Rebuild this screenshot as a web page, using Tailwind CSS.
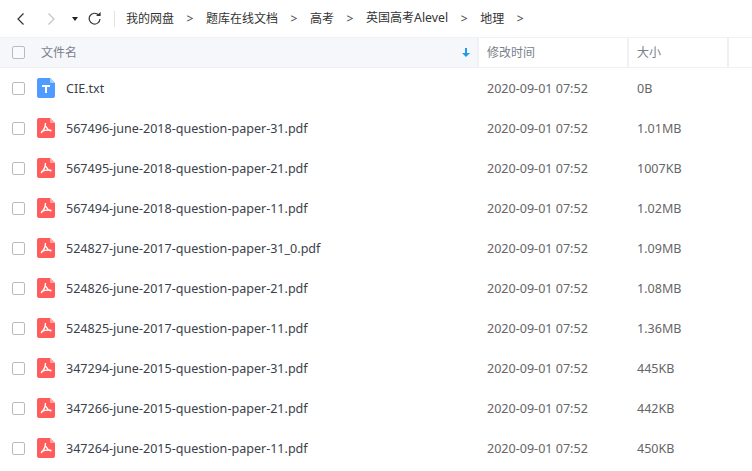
<!DOCTYPE html>
<html lang="en">

<head>
  <meta charset="UTF-8" />
  <title>文件列表</title>
  <script src="https://cdn.jsdelivr.net/npm/@tailwindcss/browser@4"></script>
</head>

<body class="bg-white w-[752px] h-[471px] overflow-hidden font-['Noto_Sans','Noto_Sans_CJK_SC',sans-serif] text-[12px] text-[#3a3f4a]">

  <!-- toolbar -->
  <div class="flex items-center h-[37px] pl-[17px] text-[#333]">
    <svg class="w-[7px] h-[12px]" viewBox="0 0 7 12" fill="none" stroke="#333" stroke-width="1.2"><path d="M6.5 0.5 L1 6 L6.5 11.5" /></svg>
    <svg class="w-[7px] h-[12px] ml-[24px]" viewBox="0 0 7 12" fill="none" stroke="#c4c4c4" stroke-width="1.2"><path d="M0.5 0.5 L6 6 L0.5 11.5" /></svg>
    <svg class="w-[6px] h-[4px] ml-[17px]" viewBox="0 0 6 4" fill="#222"><path d="M0 0 H6 L3 4 Z" /></svg>
    <svg class="w-[13px] h-[13px] ml-[10px]" viewBox="0 0 13 13" fill="none" stroke="#333" stroke-width="1.2"><path d="M10.6 3 A5.4 5.4 0 1 0 12 7" /><path d="M8 4 L12.6 4 L12.6 0 Z" fill="#333" stroke="none" /></svg>
    <div class="w-px h-[16px] bg-[#e2e2e2] ml-[13px]"></div>
    <div class="flex items-center ml-[11px]">
      <span>我的网盘</span><span class="w-[32px] text-center text-[#444]">&gt;</span>
      <span>题库在线文档</span><span class="w-[32px] text-center text-[#444]">&gt;</span>
      <span>高考</span><span class="w-[32px] text-center text-[#444]">&gt;</span>
      <span>英国高考<span class="text-[12.3px]">Alevel</span></span><span class="w-[32px] text-center text-[#444]">&gt;</span>
      <span>地理</span><span class="w-[32px] text-center text-[#444]">&gt;</span>
    </div>
  </div>

  <!-- table header -->
  <div class="flex h-[31px] bg-[#f6f7fb] border-y border-[#f0f1f4] text-[#7a7f8c]">
    <div class="w-[479px] flex items-center pl-[12px] pr-[7px] border-r-2 border-[#f0f1f4]">
      <span class="w-[13px] h-[13px] border border-[#bbb] rounded-[2px] bg-white/40"></span>
      <span class="ml-[16px] flex-1">文件名</span>
      <svg class="w-[8px] h-[9px]" viewBox="0 0 8 9" fill="#1e9bf0"><path d="M3 0 H5 V5 H8 L4 9 L0 5 H3 Z" /></svg>
    </div>
    <div class="w-[150px] flex items-center pl-[8px] bg-white border-r-2 border-[#f0f1f4]">修改时间</div>
    <div class="w-[100px] flex items-center pl-[8px] bg-white border-r-2 border-[#f0f1f4]">大小</div>
    <div class="flex-1 bg-white"></div>
  </div>

  <!-- rows -->
  <div class="text-[12.55px]">
    <div class="flex items-center h-[40px]">
      <span class="w-[13px] h-[13px] ml-[12px] border border-[#bbb] rounded-[2px]"></span>
      <svg class="w-[18px] h-[20px] ml-[12px]" viewBox="0 0 18 20"><path d="M2 0 H13 L18 5 V18 A2 2 0 0 1 16 20 H2 A2 2 0 0 1 0 18 V2 A2 2 0 0 1 2 0 Z" fill="#4f9bff" /><path d="M13 0 L18 5 H14 A1 1 0 0 1 13 4 Z" fill="#a9cdff" /><path d="M5 7 H13 V9 H10 V15 H8 V9 H5 Z" fill="#fff" /></svg>
      <div class="flex pt-[2px] ml-[11px]">
        <span class="w-[421px]">CIE.txt</span>
        <span class="w-[150px] text-[#666]">2020-09-01 07:52</span>
        <span class="text-[#666]">0B</span>
      </div>
    </div>
    <div class="flex items-center h-[40px]">
      <span class="w-[13px] h-[13px] ml-[12px] border border-[#bbb] rounded-[2px]"></span>
      <svg class="w-[18px] h-[20px] ml-[12px]" viewBox="0 0 18 20"><path d="M2 0 H13 L18 5 V18 A2 2 0 0 1 16 20 H2 A2 2 0 0 1 0 18 V2 A2 2 0 0 1 2 0 Z" fill="#ff5c5c" /><path d="M13 0 L18 5 H14 A1 1 0 0 1 13 4 Z" fill="#ffa9a9" /><path d="M8.5 5 C8.5 9 7 12 4 15 M4.5 13.5 C8 12 11 11.5 14.5 12.5 M8.5 8 C9.5 10 11 12 14 13" fill="none" stroke="#fff" stroke-width="1.4" /></svg>
      <div class="flex pt-[2px] ml-[11px]">
        <span class="w-[421px]">567496-june-2018-question-paper-31.pdf</span>
        <span class="w-[150px] text-[#666]">2020-09-01 07:52</span>
        <span class="text-[#666]">1.01MB</span>
      </div>
    </div>
    <div class="flex items-center h-[40px]">
      <span class="w-[13px] h-[13px] ml-[12px] border border-[#bbb] rounded-[2px]"></span>
      <svg class="w-[18px] h-[20px] ml-[12px]" viewBox="0 0 18 20"><path d="M2 0 H13 L18 5 V18 A2 2 0 0 1 16 20 H2 A2 2 0 0 1 0 18 V2 A2 2 0 0 1 2 0 Z" fill="#ff5c5c" /><path d="M13 0 L18 5 H14 A1 1 0 0 1 13 4 Z" fill="#ffa9a9" /><path d="M8.5 5 C8.5 9 7 12 4 15 M4.5 13.5 C8 12 11 11.5 14.5 12.5 M8.5 8 C9.5 10 11 12 14 13" fill="none" stroke="#fff" stroke-width="1.4" /></svg>
      <div class="flex pt-[2px] ml-[11px]">
        <span class="w-[421px]">567495-june-2018-question-paper-21.pdf</span>
        <span class="w-[150px] text-[#666]">2020-09-01 07:52</span>
        <span class="text-[#666]">1007KB</span>
      </div>
    </div>
    <div class="flex items-center h-[40px]">
      <span class="w-[13px] h-[13px] ml-[12px] border border-[#bbb] rounded-[2px]"></span>
      <svg class="w-[18px] h-[20px] ml-[12px]" viewBox="0 0 18 20"><path d="M2 0 H13 L18 5 V18 A2 2 0 0 1 16 20 H2 A2 2 0 0 1 0 18 V2 A2 2 0 0 1 2 0 Z" fill="#ff5c5c" /><path d="M13 0 L18 5 H14 A1 1 0 0 1 13 4 Z" fill="#ffa9a9" /><path d="M8.5 5 C8.5 9 7 12 4 15 M4.5 13.5 C8 12 11 11.5 14.5 12.5 M8.5 8 C9.5 10 11 12 14 13" fill="none" stroke="#fff" stroke-width="1.4" /></svg>
      <div class="flex pt-[2px] ml-[11px]">
        <span class="w-[421px]">567494-june-2018-question-paper-11.pdf</span>
        <span class="w-[150px] text-[#666]">2020-09-01 07:52</span>
        <span class="text-[#666]">1.02MB</span>
      </div>
    </div>
    <div class="flex items-center h-[40px]">
      <span class="w-[13px] h-[13px] ml-[12px] border border-[#bbb] rounded-[2px]"></span>
      <svg class="w-[18px] h-[20px] ml-[12px]" viewBox="0 0 18 20"><path d="M2 0 H13 L18 5 V18 A2 2 0 0 1 16 20 H2 A2 2 0 0 1 0 18 V2 A2 2 0 0 1 2 0 Z" fill="#ff5c5c" /><path d="M13 0 L18 5 H14 A1 1 0 0 1 13 4 Z" fill="#ffa9a9" /><path d="M8.5 5 C8.5 9 7 12 4 15 M4.5 13.5 C8 12 11 11.5 14.5 12.5 M8.5 8 C9.5 10 11 12 14 13" fill="none" stroke="#fff" stroke-width="1.4" /></svg>
      <div class="flex pt-[2px] ml-[11px]">
        <span class="w-[421px]">524827-june-2017-question-paper-31_0.pdf</span>
        <span class="w-[150px] text-[#666]">2020-09-01 07:52</span>
        <span class="text-[#666]">1.09MB</span>
      </div>
    </div>
    <div class="flex items-center h-[40px]">
      <span class="w-[13px] h-[13px] ml-[12px] border border-[#bbb] rounded-[2px]"></span>
      <svg class="w-[18px] h-[20px] ml-[12px]" viewBox="0 0 18 20"><path d="M2 0 H13 L18 5 V18 A2 2 0 0 1 16 20 H2 A2 2 0 0 1 0 18 V2 A2 2 0 0 1 2 0 Z" fill="#ff5c5c" /><path d="M13 0 L18 5 H14 A1 1 0 0 1 13 4 Z" fill="#ffa9a9" /><path d="M8.5 5 C8.5 9 7 12 4 15 M4.5 13.5 C8 12 11 11.5 14.5 12.5 M8.5 8 C9.5 10 11 12 14 13" fill="none" stroke="#fff" stroke-width="1.4" /></svg>
      <div class="flex pt-[2px] ml-[11px]">
        <span class="w-[421px]">524826-june-2017-question-paper-21.pdf</span>
        <span class="w-[150px] text-[#666]">2020-09-01 07:52</span>
        <span class="text-[#666]">1.08MB</span>
      </div>
    </div>
    <div class="flex items-center h-[40px]">
      <span class="w-[13px] h-[13px] ml-[12px] border border-[#bbb] rounded-[2px]"></span>
      <svg class="w-[18px] h-[20px] ml-[12px]" viewBox="0 0 18 20"><path d="M2 0 H13 L18 5 V18 A2 2 0 0 1 16 20 H2 A2 2 0 0 1 0 18 V2 A2 2 0 0 1 2 0 Z" fill="#ff5c5c" /><path d="M13 0 L18 5 H14 A1 1 0 0 1 13 4 Z" fill="#ffa9a9" /><path d="M8.5 5 C8.5 9 7 12 4 15 M4.5 13.5 C8 12 11 11.5 14.5 12.5 M8.5 8 C9.5 10 11 12 14 13" fill="none" stroke="#fff" stroke-width="1.4" /></svg>
      <div class="flex pt-[2px] ml-[11px]">
        <span class="w-[421px]">524825-june-2017-question-paper-11.pdf</span>
        <span class="w-[150px] text-[#666]">2020-09-01 07:52</span>
        <span class="text-[#666]">1.36MB</span>
      </div>
    </div>
    <div class="flex items-center h-[40px]">
      <span class="w-[13px] h-[13px] ml-[12px] border border-[#bbb] rounded-[2px]"></span>
      <svg class="w-[18px] h-[20px] ml-[12px]" viewBox="0 0 18 20"><path d="M2 0 H13 L18 5 V18 A2 2 0 0 1 16 20 H2 A2 2 0 0 1 0 18 V2 A2 2 0 0 1 2 0 Z" fill="#ff5c5c" /><path d="M13 0 L18 5 H14 A1 1 0 0 1 13 4 Z" fill="#ffa9a9" /><path d="M8.5 5 C8.5 9 7 12 4 15 M4.5 13.5 C8 12 11 11.5 14.5 12.5 M8.5 8 C9.5 10 11 12 14 13" fill="none" stroke="#fff" stroke-width="1.4" /></svg>
      <div class="flex pt-[2px] ml-[11px]">
        <span class="w-[421px]">347294-june-2015-question-paper-31.pdf</span>
        <span class="w-[150px] text-[#666]">2020-09-01 07:52</span>
        <span class="text-[#666]">445KB</span>
      </div>
    </div>
    <div class="flex items-center h-[40px]">
      <span class="w-[13px] h-[13px] ml-[12px] border border-[#bbb] rounded-[2px]"></span>
      <svg class="w-[18px] h-[20px] ml-[12px]" viewBox="0 0 18 20"><path d="M2 0 H13 L18 5 V18 A2 2 0 0 1 16 20 H2 A2 2 0 0 1 0 18 V2 A2 2 0 0 1 2 0 Z" fill="#ff5c5c" /><path d="M13 0 L18 5 H14 A1 1 0 0 1 13 4 Z" fill="#ffa9a9" /><path d="M8.5 5 C8.5 9 7 12 4 15 M4.5 13.5 C8 12 11 11.5 14.5 12.5 M8.5 8 C9.5 10 11 12 14 13" fill="none" stroke="#fff" stroke-width="1.4" /></svg>
      <div class="flex pt-[2px] ml-[11px]">
        <span class="w-[421px]">347266-june-2015-question-paper-21.pdf</span>
        <span class="w-[150px] text-[#666]">2020-09-01 07:52</span>
        <span class="text-[#666]">442KB</span>
      </div>
    </div>
    <div class="flex items-center h-[40px]">
      <span class="w-[13px] h-[13px] ml-[12px] border border-[#bbb] rounded-[2px]"></span>
      <svg class="w-[18px] h-[20px] ml-[12px]" viewBox="0 0 18 20"><path d="M2 0 H13 L18 5 V18 A2 2 0 0 1 16 20 H2 A2 2 0 0 1 0 18 V2 A2 2 0 0 1 2 0 Z" fill="#ff5c5c" /><path d="M13 0 L18 5 H14 A1 1 0 0 1 13 4 Z" fill="#ffa9a9" /><path d="M8.5 5 C8.5 9 7 12 4 15 M4.5 13.5 C8 12 11 11.5 14.5 12.5 M8.5 8 C9.5 10 11 12 14 13" fill="none" stroke="#fff" stroke-width="1.4" /></svg>
      <div class="flex pt-[2px] ml-[11px]">
        <span class="w-[421px]">347264-june-2015-question-paper-11.pdf</span>
        <span class="w-[150px] text-[#666]">2020-09-01 07:52</span>
        <span class="text-[#666]">450KB</span>
      </div>
    </div>
  </div>

</body>

</html>
